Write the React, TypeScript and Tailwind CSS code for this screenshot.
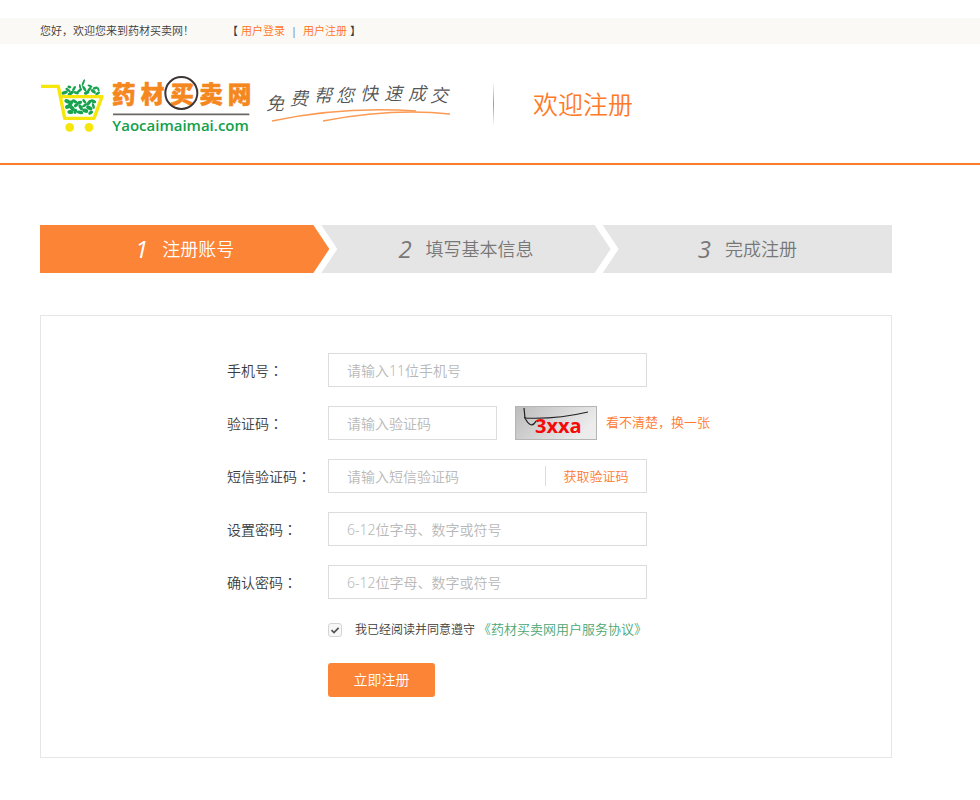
import type { ReactNode } from 'react';

const leaves: [number, number, number, number, number][] = [
  [104, 80, 10, 5, -20], [114, 72, 9, 4, 35], [122, 82, 10, 5, -35], [118, 63, 6, 4, 10],
  [132, 68, 9, 4, -60], [138, 80, 9, 4, 20], [148, 74, 10, 4, -40], [150, 62, 8, 3, 80],
  [160, 50, 11, 3, -70], [163, 68, 10, 4, 60], [170, 80, 9, 5, -25], [178, 70, 9, 4, -50],
  [180, 60, 8, 3, 20], [190, 76, 9, 5, 40], [196, 66, 8, 4, -15], [205, 70, 7, 3, 70],
  [203, 82, 8, 4, -30], [112, 106, 9, 6, 20], [122, 112, 10, 6, -60], [114, 122, 9, 6, -20],
  [126, 126, 11, 6, 50], [121, 138, 9, 6, 10], [134, 106, 9, 5, 30], [138, 118, 7, 5, -40],
  [136, 136, 8, 5, -70], [148, 110, 9, 5, -20], [152, 124, 10, 5, 60], [150, 139, 10, 5, 10],
  [163, 106, 8, 4, 50], [164, 118, 9, 4, -30], [166, 134, 9, 6, 20], [177, 110, 10, 5, -55],
  [178, 126, 10, 6, 25], [182, 140, 8, 5, -35], [190, 106, 9, 5, 20], [190, 120, 9, 4, 75],
];

function Brand() {
  return (
    <svg width="211" height="60" viewBox="30 24 633 180" role="img" aria-label="药材买卖网" className="shrink-0 overflow-visible">
      <g fill="#17a34f">
        {leaves.map(([x, y, rx, ry, turn], i) => (
          <ellipse key={i} cx={x} cy={y} rx={rx} ry={ry} transform={`rotate(${turn} ${x} ${y})`} />
        ))}
      </g>
      <path d="M33 61H85L104 157H192L216 92H94" fill="none" stroke="#f6e60b" strokeWidth="10" strokeLinejoin="round" />
      <circle cx="119" cy="184" r="13" fill="#f6e60b" />
      <circle cx="177" cy="184" r="13" fill="#f6e60b" />
      <text
        x="246 332 421 508 593"
        y="110"
        fontSize="71"
        fontWeight="900"
        fill="#f5871f"
        stroke="#f5871f"
        strokeWidth="1.5"
        className="font-['Noto_Sans_CJK_SC',sans-serif]"
      >
        药材买卖网
      </text>
      <circle cx="454" cy="81" r="48" fill="none" stroke="#3d3533" strokeWidth="6" />
      <path d="M249 145H658" stroke="#6b6765" strokeWidth="5" />
      <text x="247" y="195" fontSize="45" fontWeight="600" fill="#12a04b" className="font-['Open_Sans',sans-serif]">
        Yaocaimaimai.com
      </text>
    </svg>
  );
}

function Slogan() {
  return (
    <svg width="196" height="52" viewBox="0 0 196 52" className="ml-[11px] shrink-0 overflow-visible" role="img" aria-label="免费帮您快速成交">
      <text
        x="4 28 52 74 98 122 146 168"
        y="32 27 24 24 22 22 22 24"
        fontSize="18"
        fontStyle="italic"
        fontWeight="350"
        fill="#555"
        className="font-['Noto_Sans_CJK_SC',sans-serif]"
      >
        免费帮您快速成交
      </text>
      <path d="M10 43Q80 28 154 33" fill="none" stroke="#fb9a55" strokeWidth="1.5" />
      <path d="M61 43Q130 30 188 36" fill="none" stroke="#fb9a55" strokeWidth="1.5" />
    </svg>
  );
}

function Captcha() {
  return (
    <svg width="82" height="34" viewBox="0 0 82 34" role="img" aria-label="3xxa" className="ml-[18px] shrink-0">
      <defs>
        <linearGradient id="paper" x1="0" y1="0" x2="1" y2="0.4">
          <stop offset="0" stopColor="#bcbcbc" />
          <stop offset="1" stopColor="#ececec" />
        </linearGradient>
      </defs>
      <rect x="0.5" y="0.5" width="81" height="33" fill="url(#paper)" stroke="#b5b5b5" />
      <text x="20" y="27" fontSize="20" fontWeight="700" fill="#f50a0a" className="font-['Open_Sans',sans-serif]">
        3xxa
      </text>
      <path d="M9 2L10 12C14 20 18 21 21 15M9 12C30 13 52 11 73 6" fill="none" stroke="#222" strokeWidth="1.2" />
    </svg>
  );
}

const box =
  'h-[34px] border border-[#dcdcdc] bg-white text-sm text-[#444] placeholder:text-[#b8b8b8] placeholder:opacity-100 outline-none focus:border-[#fb8436]';

function Row({ id, label, children }: { id: string; label: string; children: ReactNode }) {
  return (
    <div className="flex items-center">
      <label htmlFor={id} className="w-[101px] shrink-0 text-sm">
        {label}
        <span className="font-['Noto_Sans_CJK_TC',sans-serif]">：</span>
      </label>
      {children}
    </div>
  );
}

function StepText({ n, children }: { n: number; children: ReactNode }) {
  return (
    <>
      <span className="font-['Open_Sans',sans-serif] text-2xl font-normal italic">{n}</span>
      <span>{children}</span>
    </>
  );
}

export default function App() {
  return (
    <div className="min-h-screen bg-white pt-[18px] pb-10 font-['Noto_Sans','Noto_Sans_CJK_SC',sans-serif] font-[350] text-[#3c3c3c]">
      <div className="flex h-[26px] items-center bg-[#fbf9f6] px-10 text-[11px]">
        <span>您好，欢迎您来到药材买卖网！</span>
        <nav className="ml-[33px] flex items-center gap-[3px]">
          <span>【</span>
          <a href="#login" className="text-[#ff7320]">用户登录</a>
          <span className="w-3 text-center">|</span>
          <a href="#register" className="text-[#ff7320]">用户注册</a>
          <span>】</span>
        </nav>
      </div>

      <header className="flex h-[121px] items-center border-b-2 border-[#fb7d2c] px-10">
        <Brand />
        <Slogan />
        <div className="ml-[35px] h-11 w-px bg-linear-to-b from-transparent via-[#999] to-transparent" />
        <h1 className="ml-[39px] text-[25px] leading-8 font-[350] text-[#ff7a28]">欢迎注册</h1>
      </header>

      <main className="mx-10 mt-[60px] max-w-[852px]">
        <ol className="flex h-12 text-lg text-[#777]">
          <li className="flex flex-1 items-center justify-center gap-[14px] bg-[#fb8436] text-white [clip-path:polygon(0_0,calc(100%-16px)_0,100%_50%,calc(100%-16px)_100%,0_100%)]">
            <StepText n={1}>注册账号</StepText>
          </li>
          <li className="-ml-2 flex flex-1 items-center justify-center gap-[14px] bg-[#e5e5e5] [clip-path:polygon(0_0,calc(100%-16px)_0,100%_50%,calc(100%-16px)_100%,0_100%,16px_50%)]">
            <StepText n={2}>填写基本信息</StepText>
          </li>
          <li className="-ml-2 flex flex-1 items-center justify-center gap-[14px] bg-[#e5e5e5] [clip-path:polygon(0_0,100%_0,100%_100%,0_100%,16px_50%)]">
            <StepText n={3}>完成注册</StepText>
          </li>
        </ol>

        <form
          className="mt-[42px] border border-[#e6e6e6] pt-[37px] pb-[60px] pl-[186px]"
          onSubmit={(e) => e.preventDefault()}
        >
          <div className="flex flex-col gap-[19px]">
            <Row id="phone" label="手机号">
              <input id="phone" type="tel" placeholder="请输入11位手机号" className={`${box} w-[319px] px-[18px]`} />
            </Row>
            <Row id="captcha" label="验证码">
              <input id="captcha" type="text" placeholder="请输入验证码" className={`${box} w-[169px] px-[18px]`} />
              <Captcha />
              <button type="button" className="ml-[9px] text-[13px] text-[#ff7a30]">
                看不清楚，换一张
              </button>
            </Row>
            <Row id="sms" label="短信验证码">
              <div className="flex h-[34px] w-[319px] items-center border border-[#dcdcdc]">
                <input
                  id="sms"
                  type="text"
                  placeholder="请输入短信验证码"
                  className="h-full min-w-0 flex-1 px-[18px] text-sm outline-none placeholder:text-[#b8b8b8] placeholder:opacity-100"
                />
                <button type="button" className="h-5 w-[101px] border-l border-[#dcdcdc] text-[13px] leading-5 text-[#ff7a30]">
                  获取验证码
                </button>
              </div>
            </Row>
            <Row id="password" label="设置密码">
              <input id="password" type="password" placeholder="6-12位字母、数字或符号" className={`${box} w-[319px] px-[18px]`} />
            </Row>
            <Row id="confirm" label="确认密码">
              <input id="confirm" type="password" placeholder="6-12位字母、数字或符号" className={`${box} w-[319px] px-[18px]`} />
            </Row>
          </div>

          <div className="mt-[21px] ml-[101px] flex h-5 items-center text-xs">
            <span className="grid">
              <input
                id="agree"
                type="checkbox"
                defaultChecked
                className="peer col-start-1 row-start-1 size-[14px] appearance-none rounded-[3px] border border-[#d4d4d4] bg-[#f7f7f7]"
              />
              <svg viewBox="0 0 14 14" className="pointer-events-none invisible col-start-1 row-start-1 size-[14px] peer-checked:visible">
                <path d="M3.5 7.2L6 9.6L10.6 4.8" fill="none" stroke="#555" strokeWidth="1.8" />
              </svg>
            </span>
            <label htmlFor="agree" className="ml-[13px]">我已经阅读并同意遵守</label>
            <a href="#terms" className="ml-[3px] text-[13px] text-[#4aa673]">《药材买卖网用户服务协议》</a>
          </div>

          <button type="submit" className="mt-[23px] ml-[101px] block h-[34px] w-[107px] rounded-[3px] bg-[#fb8436] text-sm text-white">
            立即注册
          </button>
        </form>
      </main>
    </div>
  );
}
